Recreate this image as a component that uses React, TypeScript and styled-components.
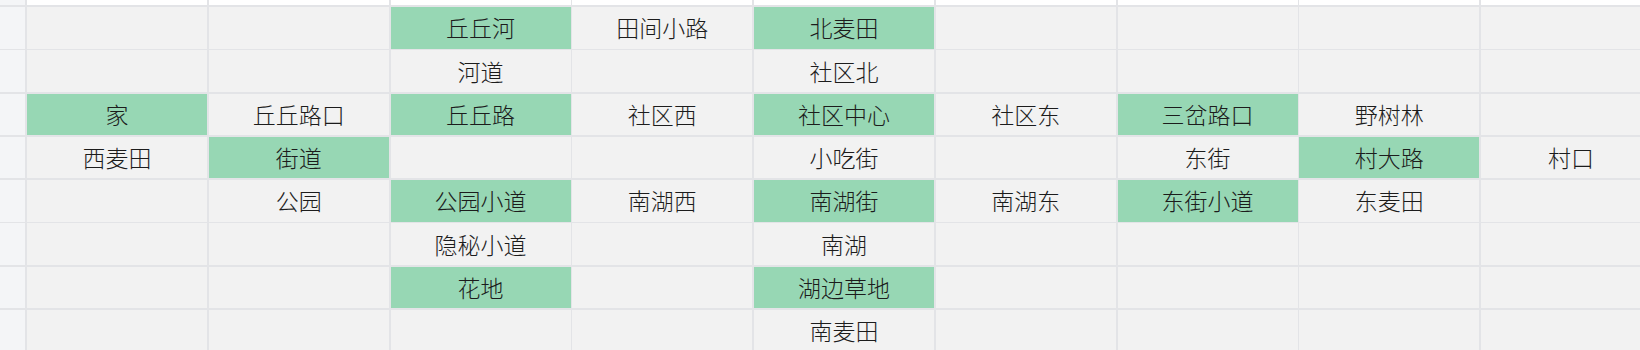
import styled, { createGlobalStyle } from 'styled-components'

const GlobalStyle = createGlobalStyle`
    html, body {
        margin: 0;
        padding: 0;
        background: #ffffff;
    }
    body {
        font-family: "Noto Sans CJK SC", "Noto Sans", sans-serif;
        overflow: hidden;
    }
`

const Sheet = styled.div`
    width: 1640px;
    height: 350px;
    overflow: hidden;
    background: #e3e4e7;
    display: grid;
    grid-template-columns: 25.25px repeat(9, 180px);
    grid-template-rows: 5.25px repeat(8, 41.5px);
    gap: 1.75px;
`

const RowHead = styled.div`
    background: #f4f5f7;
`

const Cell = styled.div<{ $green?: boolean; $top?: boolean }>`
    display: flex;
    align-items: center;
    justify-content: center;
    background: ${({ $green, $top }) => ($top ? '#ffffff' : $green ? '#97d7b4' : '#f2f2f2')};
    color: #1c1c1c;
    font-size: 23px;
    font-weight: 300;
    line-height: 1;
    white-space: nowrap;
`

type Entry = [number, string, boolean?]

const rows: Entry[][] = [
    [[3, '丘丘河', true], [4, '田间小路'], [5, '北麦田', true]],
    [[3, '河道'], [5, '社区北']],
    [
        [1, '家', true],
        [2, '丘丘路口'],
        [3, '丘丘路', true],
        [4, '社区西'],
        [5, '社区中心', true],
        [6, '社区东'],
        [7, '三岔路口', true],
        [8, '野树林'],
    ],
    [[1, '西麦田'], [2, '街道', true], [5, '小吃街'], [7, '东街'], [8, '村大路', true], [9, '村口']],
    [
        [2, '公园'],
        [3, '公园小道', true],
        [4, '南湖西'],
        [5, '南湖街', true],
        [6, '南湖东'],
        [7, '东街小道', true],
        [8, '东麦田'],
    ],
    [[3, '隐秘小道'], [5, '南湖']],
    [[3, '花地', true], [5, '湖边草地', true]],
    [[5, '南麦田']],
]

const cols = [1, 2, 3, 4, 5, 6, 7, 8, 9]

export default function App() {
    return (
        <>
            <GlobalStyle />
            <Sheet>
                <RowHead />
                {cols.map((c) => (
                    <Cell key={`top-${c}`} $top />
                ))}
                {rows.map((row, r) => [
                    <RowHead key={`h-${r}`} />,
                    ...cols.map((c) => {
                        const hit = row.find((e) => e[0] === c)
                        return (
                            <Cell key={`${r}-${c}`} $green={hit?.[2]}>
                                {hit?.[1]}
                            </Cell>
                        )
                    }),
                ])}
            </Sheet>
        </>
    )
}
